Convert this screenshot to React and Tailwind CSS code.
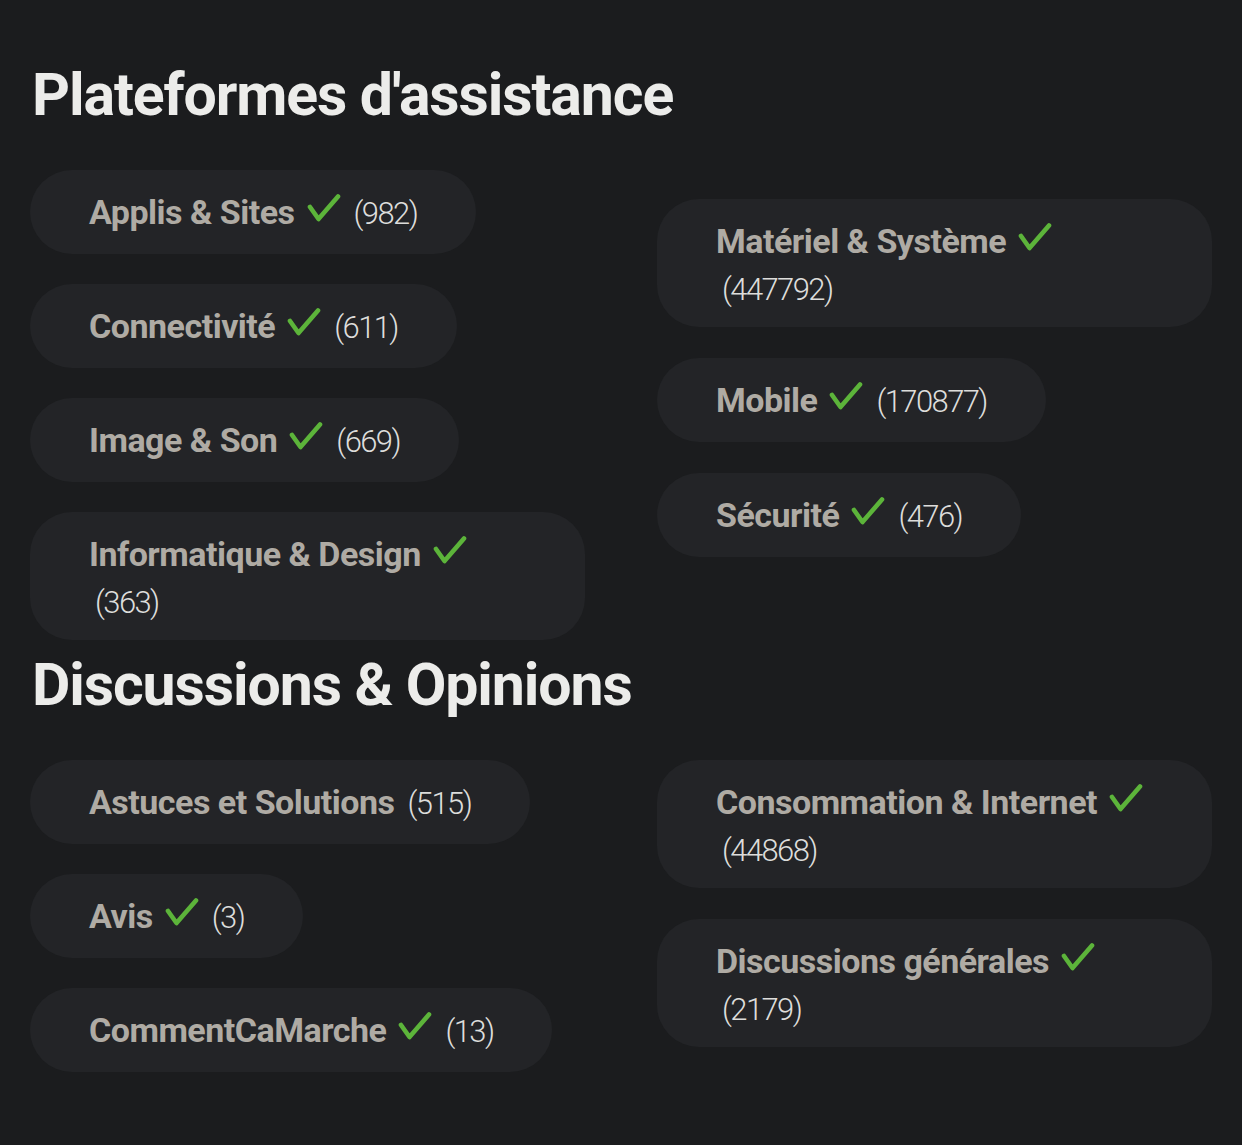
import React from "react";

const sections = [
  {
    title: "Plateformes d'assistance",
    offsetRight: true,
    left: [
      { name: "Applis & Sites", count: 982, checked: true },
      { name: "Connectivité", count: 611, checked: true },
      { name: "Image & Son", count: 669, checked: true },
      { name: "Informatique & Design", count: 363, checked: true },
    ],
    right: [
      { name: "Matériel & Système", count: 447792, checked: true },
      { name: "Mobile", count: 170877, checked: true },
      { name: "Sécurité", count: 476, checked: true },
    ],
  },
  {
    title: "Discussions & Opinions",
    offsetRight: false,
    left: [
      { name: "Astuces et Solutions", count: 515, checked: false },
      { name: "Avis", count: 3, checked: true },
      { name: "CommentCaMarche", count: 13, checked: true },
    ],
    right: [
      { name: "Consommation & Internet", count: 44868, checked: true },
      { name: "Discussions générales", count: 2179, checked: true },
    ],
  },
];

function Check() {
  return (
    <svg
      viewBox="0 0 34 30"
      className="ml-[12px] inline-block h-[30px] w-[34px] align-[1px]"
      fill="none"
      stroke="#5cb43a"
      strokeWidth="4.6"
      strokeLinecap="round"
      strokeLinejoin="round"
    >
      <path d="M3 14 L11.5 26 L31 3.5" />
    </svg>
  );
}

function Chip({ name, count, checked }) {
  return (
    <div className="flex max-w-full flex-wrap items-baseline rounded-[42px] bg-[#232427] px-[59px] py-[17px]">
      <span className="whitespace-nowrap pr-[7px] text-[34px] font-bold leading-[50px] tracking-[-0.5px] text-[#afaba4]">
        {name}
        {checked && <Check />}
      </span>
      <span className="ml-[6px] whitespace-nowrap pt-[4px] text-[31px] font-light leading-[40px] tracking-[-1.6px] text-[#dddddb]">
        ({count})
      </span>
    </div>
  );
}

export default function App() {
  return (
    <div
      className="min-h-screen w-full bg-[#1b1c1e] px-[30px] pt-[60px] pb-[70px]"
      style={{ fontFamily: "Roboto, 'Liberation Sans', sans-serif" }}
    >
      {sections.map((section, i) => (
        <section key={section.title} className={i > 0 ? "mt-[10px]" : ""}>
          <h1 className="pl-[2px] text-[59px] font-bold leading-[70px] tracking-[-1.1px] text-[#ececea]">
            {section.title}
          </h1>
          <div className="mt-[40px] grid grid-cols-2 gap-x-[72px]">
            <div className="flex flex-col items-start gap-[30px]">
              {section.left.map((item) => (
                <Chip key={item.name} {...item} />
              ))}
            </div>
            <div
              className={
                "flex flex-col items-start gap-[31px] " +
                (section.offsetRight ? "mt-[29px]" : "")
              }
            >
              {section.right.map((item) => (
                <Chip key={item.name} {...item} />
              ))}
            </div>
          </div>
        </section>
      ))}
    </div>
  );
}
